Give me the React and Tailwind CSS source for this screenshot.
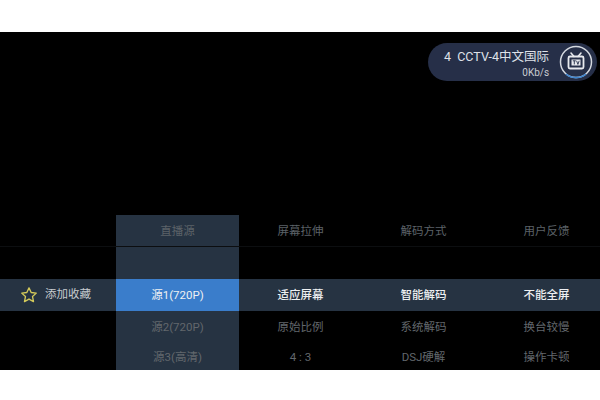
const FONT = 'font-["Roboto","Noto_Sans_CJK_SC",sans-serif]'

const rows = [
  { left: '', cells: ['直播源', '屏幕拉伸', '解码方式', '用户反馈'], tone: 'text-[#5c6268]', h: 'h-8', border: true },
  { left: '', cells: ['', '', '', ''], tone: '', h: 'h-8' },
  { left: '添加收藏', cells: ['源1(720P)', '适应屏幕', '智能解码', '不能全屏'], tone: 'text-[#eef0f2] font-medium', h: 'h-8', active: true },
  { left: '', cells: ['源2(720P)', '原始比例', '系统解码', '换台较慢'], tone: 'text-[#62676c]', h: 'h-8' },
  { left: '', cells: ['源3(高清)', '4 : 3', 'DSJ硬解', '操作卡顿'], tone: 'text-[#62676c]', h: 'h-[27px]' },
]

function TvBadge() {
  return (
    <svg width="34" height="34" viewBox="0 0 34 34" fill="none" className="shrink-0">
      <circle cx="17" cy="17" r="15.5" stroke="#d5d9e0" strokeWidth="1.5" />
      <path d="M7 29a15.5 15.5 0 0 0 20 0" stroke="#3f86d0" strokeWidth="1.6" />
      <path d="M12 8l3 3.5M22 8l-3 3.5" stroke="#e8eaee" strokeWidth="1.6" strokeLinecap="round" />
      <rect x="9.5" y="11.5" width="15" height="12" rx="1.5" stroke="#e8eaee" strokeWidth="1.8" />
      <rect x="12.5" y="14.5" width="9" height="6" fill="#e8eaee" />
      <path d="M13.8 15.8h3M15.3 15.8v3.6M17.6 15.8l1.3 3.6 1.3-3.6" stroke="#26304a" strokeWidth="0.9" />
    </svg>
  )
}

function Star() {
  return (
    <svg width="18" height="18" viewBox="0 0 24 24" fill="none" stroke="#d3c95a" strokeWidth="1.8" strokeLinejoin="round">
      <path d="M12 2.5l2.9 6.2 6.8.8-5 4.6 1.3 6.7-6-3.4-6 3.4 1.3-6.7-5-4.6 6.8-.8z" />
    </svg>
  )
}

export default function App() {
  return (
    <div className={`w-[600px] h-[400px] bg-white overflow-hidden pt-8 ${FONT}`}>
      <div className="h-[338px] bg-black flex flex-col overflow-hidden">
        {/* channel pill */}
        <div className="flex justify-end pt-[11px] pr-[3px]">
          <div className="w-[169px] h-[38px] rounded-full bg-[#262f48] flex items-center justify-between pl-4 pr-[4px]">
            <div className="flex flex-col items-end pt-[2px] pr-[3px]">
              <div className="text-[12.5px] leading-[17px] text-[#dfe2e8] whitespace-pre">4  CCTV-4中文国际</div>
              <div className="text-[10px] leading-[12px] text-[#c9ccd2] mt-[2px]">0Kb/s</div>
            </div>
            <TvBadge />
          </div>
        </div>

        {/* settings menu */}
        <div className="mt-auto">
          {rows.map((row, i) => (
            <div
              key={i}
              className={`grid grid-cols-[116px_123px_123px_123px_123px] w-[608px] text-[11.5px] ${row.h} ${row.active ? 'bg-[#263342]' : ''} ${row.border ? 'border-b border-[#0c0e10]' : ''}`}
            >
              <div className="flex items-center">
                {row.left && (
                  <div className="flex items-center gap-[7px] pl-[20px] text-[#c8ccd0]">
                    <Star />
                    <span>{row.left}</span>
                  </div>
                )}
              </div>
              {row.cells.map((text, j) => (
                <div
                  key={j}
                  className={`flex items-center justify-center pt-[2px] ${row.tone} ${j === 0 ? (row.active ? 'bg-[#3a7dcb] text-[#e6eef8] font-normal' : 'bg-[#263342]') : ''}`}
                >
                  {text}
                </div>
              ))}
            </div>
          ))}
        </div>
      </div>
    </div>
  )
}
